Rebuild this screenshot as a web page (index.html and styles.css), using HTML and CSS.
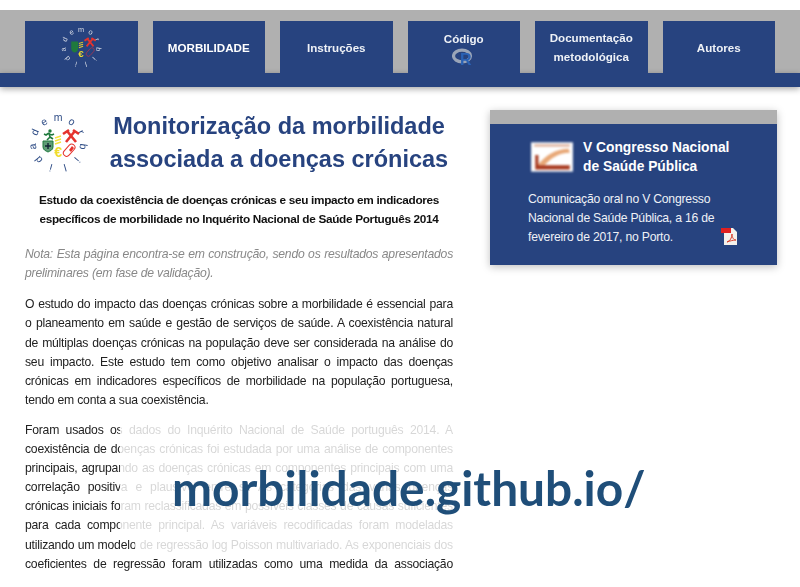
FILE: index.html
```html
<!DOCTYPE html>
<html lang="pt">
<head>
    <meta charset="UTF-8">
    <meta name="viewport" content="width=device-width, initial-scale=1.0">
    <title>Morbilidade</title>
    <link rel="stylesheet" href="styles.css">
</head>
<body>
    <header class="site-header">
        <nav class="tabs">
            <a class="tab">
                <svg class="tab-logo" viewBox="0 0 66 66">
                    <g class="logo-letters" fill="currentColor">
                        <text x="33" y="11" transform="rotate(0 33 33)">m</text>
                        <text x="33" y="11" transform="rotate(33 33 33)">o</text>
                        <text x="33" y="11" transform="rotate(65 33 33)">r</text>
                        <text x="33" y="11" transform="rotate(98 33 33)">b</text>
                        <text x="33" y="11" transform="rotate(131 33 33)">i</text>
                        <text x="33" y="11" transform="rotate(164 33 33)">l</text>
                        <text x="33" y="11" transform="rotate(196 33 33)">i</text>
                        <text x="33" y="11" transform="rotate(229 33 33)">d</text>
                        <text x="33" y="11" transform="rotate(262 33 33)">a</text>
                        <text x="33" y="11" transform="rotate(295 33 33)">d</text>
                        <text x="33" y="11" transform="rotate(327 33 33)">e</text>
                    </g>
                    <path d="M19 25h10v10c0 4-3 5-5 6-2-1-5-2-5-6z" fill="#1f7a3d"/>
                    <path d="M30 28l6-2M30 31l6-2M30 34l6-2" stroke="#e0cd2c" stroke-width="1.5"/>
                    <text class="logo-euro" x="33" y="47">€</text>
                    <path d="M41 32l9-11M51 32l-9-11M38 24l6-4M54 24l-6-4" stroke="#e5322d" stroke-width="2.6" fill="none"/>
                    <rect x="39" y="37" width="14" height="6.5" rx="3.2" transform="rotate(-48 46 40)" fill="none" stroke="#b5334a"/>
                </svg>
            </a>
            <a class="tab tab-active">MORBILIDADE</a>
            <a class="tab">Instruções</a>
            <a class="tab">
                Código
                <svg class="r-icon" viewBox="0 0 24 19">
                    <ellipse cx="10" cy="8" rx="8.5" ry="5.8" fill="none" stroke="#9aa5b8" stroke-width="3.2"/>
                    <text x="8" y="16.5" class="r-letter">R</text>
                </svg>
            </a>
            <a class="tab">Documentação<br>metodológica</a>
            <a class="tab">Autores</a>
        </nav>
        <div class="header-strip"></div>
    </header>

    <main class="page">
        <section class="content">
            <div class="title-row">
                <svg class="title-logo" viewBox="0 0 66 66">
                    <g class="logo-letters" fill="currentColor">
                        <text x="33" y="11" transform="rotate(0 33 33)">m</text>
                        <text x="33" y="11" transform="rotate(33 33 33)">o</text>
                        <text x="33" y="11" transform="rotate(65 33 33)">r</text>
                        <text x="33" y="11" transform="rotate(98 33 33)">b</text>
                        <text x="33" y="11" transform="rotate(131 33 33)">i</text>
                        <text x="33" y="11" transform="rotate(164 33 33)">l</text>
                        <text x="33" y="11" transform="rotate(196 33 33)">i</text>
                        <text x="33" y="11" transform="rotate(229 33 33)">d</text>
                        <text x="33" y="11" transform="rotate(262 33 33)">a</text>
                        <text x="33" y="11" transform="rotate(295 33 33)">d</text>
                        <text x="33" y="11" transform="rotate(327 33 33)">e</text>
                    </g>
                    <circle cx="25" cy="21" r="1.7" fill="#1f7a3d"/>
                    <path d="M24 23l-3 2-2-1M24 23l1 4-3 3M25 27l3 2M24 24l3 1 2-1" fill="none" stroke="#1f7a3d" stroke-width="1.6"/>
                    <path d="M18 31h10v6c0 3-3 4-5 5-2-1-5-2-5-5z" fill="#5f9c76" stroke="#1f7a3d"/>
                    <path d="M23 33v6M20 36h6" stroke="#123" stroke-width="1.4"/>
                    <path d="M30 28l6-2M30 31l6-2M30 34l6-2" stroke="#f4e23c" stroke-width="1.5"/>
                    <text class="logo-euro" x="33" y="47">€</text>
                    <path d="M41 32l9-11M51 32l-9-11M38 24l6-4M54 24l-6-4" stroke="#e5322d" stroke-width="2.6" fill="none"/>
                    <rect x="37" y="37" width="14" height="6.5" rx="3.2" transform="rotate(-48 44 40)" fill="#fff" stroke="#e5322d"/>
                    <path d="M44 40l3-4 2 2-3 4z" fill="#e5322d"/>
                </svg>
                <h1>Monitorização da morbilidade<br>associada a doenças crónicas</h1>
            </div>
            <h2>Estudo da coexistência de doenças crónicas e seu impacto em indicadores<br>específicos de morbilidade no Inquérito Nacional de Saúde Português 2014</h2>
            <p class="note">Nota: Esta página encontra-se em construção, sendo os resultados apresentados preliminares (em fase de validação).</p>
            <p>O estudo do impacto das doenças crónicas sobre a morbilidade é essencial para o planeamento em saúde e gestão de serviços de saúde. A coexistência natural de múltiplas doenças crónicas na população deve ser considerada na análise do seu impacto. Este estudo tem como objetivo analisar o impacto das doenças crónicas em indicadores específicos de morbilidade na população portuguesa, tendo em conta a sua coexistência.</p>
            <p class="cut">Foram usados os dados do Inquérito Nacional de Saúde português 2014. A<br>coexistência de doenças crónicas foi estudada por uma análise de componentes<br>principais, agrupando as doenças crónicas em componentes principais com uma<br>correlação positiva e plausível entre si. As categorias das várias doenças<br>crónicas iniciais foram reclassificadas em possíveis classes de causas suficientes<br>para cada componente principal. As variáveis recodificadas foram modeladas<br>utilizando um modelo de regressão log Poisson multivariado. As exponenciais dos<br>coeficientes de regressão foram utilizadas como uma medida da associação</p>
        </section>

        <aside class="card">
            <div class="card-top"></div>
            <div class="card-body">
                <div class="card-head">
                    <svg class="card-pic" viewBox="0 0 44 32">
                        <rect x="2" y="2" width="40" height="28" fill="#fff"/>
                        <path d="M5 5h34" stroke="#d9a58c" stroke-width="2"/>
                        <path d="M8 24C16 14 26 8 38 8l1 4C28 12 20 18 15 24z" fill="#e8a877"/>
                        <path d="M6 14h3v10h30v4H6z" fill="#a8391e"/>
                    </svg>
                    <h3>V Congresso Nacional<br>de Saúde Pública</h3>
                </div>
                <p>Comunicação oral no V Congresso<br>Nacional de Saúde Pública, a 16 de<br>fevereiro de 2017, no Porto.</p>
                <svg class="pdf-icon" viewBox="0 0 17 19">
                    <path d="M3 1h9l4 4v13H3z" fill="#f4f1ec"/>
                    <rect x="0" y="1" width="10" height="5" fill="#e02020"/>
                    <path d="M6 15c3-1 5-4 5-8 0 4 2 6 4 6-3 0-6 1-9 2z" fill="none" stroke="#d8402c"/>
                </svg>
            </div>
        </aside>
    </main>

    <div class="fade"></div>
    <div class="watermark">morbilidade.github.io/</div>
</body>
</html>
```

FILE: styles.css
```css
html, body {
    margin: 0;
    height: 587px;
    overflow: hidden;
    background: #fff;
}
body {
    font-family: "Liberation Sans", Arial, sans-serif;
    font-size: 12.2px;
    letter-spacing: -0.22px;
    color: #222;
}
.site-header {
    padding-top: 10px;
    height: 85px;
    filter: blur(0.3px);
}
.tabs {
    display: flex;
    gap: 15px;
    height: 52px;
    padding: 11px 0 0 25px;
    background: #b0b0b0;
}
.tab {
    display: flex;
    flex-direction: column;
    align-items: center;
    justify-content: center;
    width: 112.5px;
    height: 52px;
    background: #27437f;
    color: #eef1f6;
    font-size: 11.6px;
    font-weight: bold;
    line-height: 19px;
    letter-spacing: 0;
    text-align: center;
}
.tab-active {
    color: #fff;
}
.tab-logo {
    width: 46px;
    height: 46px;
    color: #d8dce6;
}
.r-icon {
    width: 24px;
    height: 19px;
    margin: 0 0 -1px 1px;
}
.r-letter {
    font: bold 16px "Liberation Sans", sans-serif;
    fill: #2a62b5;
}
.header-strip {
    height: 14px;
    background: #27437f;
    box-shadow: 0 2px 6px rgba(0, 0, 0, 0.35);
}
.page {
    display: flex;
    align-items: flex-start;
    gap: 37px;
    padding: 15px 0 0 25px;
    filter: blur(0.3px);
}
.content {
    width: 428px;
    flex: none;
}
.title-logo {
    width: 66px;
    height: 66px;
    flex: none;
    color: #2f4d86;
}
.logo-letters {
    font: 10.5px "Liberation Sans", sans-serif;
    letter-spacing: 0;
    text-anchor: middle;
}
.logo-euro {
    font: bold 14px "Liberation Sans", sans-serif;
    fill: #f0dc2c;
    text-anchor: middle;
}
.title-row {
    display: flex;
    align-items: flex-start;
}
h1 {
    flex: 1;
    margin: 0;
    padding-left: 14px;
    font-size: 23.5px;
    line-height: 33px;
    font-weight: bold;
    letter-spacing: 0;
    color: #27437f;
    text-align: center;
}
h2 {
    margin: 15px 0 0;
    font-size: 11.8px;
    line-height: 19.1px;
    font-weight: bold;
    letter-spacing: -0.32px;
    color: #111;
    text-align: center;
}
p {
    margin: 12px 0 0;
    line-height: 19.1px;
    text-align: justify;
}
.note {
    margin-top: 16px;
    color: #888;
    font-style: italic;
}
.cut {
    margin-top: 11px;
    text-align-last: justify;
}
.card {
    width: 287px;
    flex: none;
    box-shadow: 0 2px 8px rgba(0, 0, 0, 0.25);
}
.card-top {
    height: 14px;
    background: #b0b0b0;
}
.card-body {
    position: relative;
    height: 141px;
    padding: 14px 20px 0 38px;
    box-sizing: border-box;
    background: #27437f;
    color: #eef1f6;
}
.card-head {
    display: flex;
    align-items: center;
    gap: 8px;
    margin-left: 1px;
}
.card-pic {
    width: 46px;
    height: 34px;
    flex: none;
    filter: blur(0.8px);
}
h3 {
    margin: 0;
    font-size: 13.8px;
    line-height: 19.1px;
    font-weight: bold;
    letter-spacing: 0;
    color: #fff;
}
.card p {
    margin: 14px 0 0;
    text-align: left;
}
.pdf-icon {
    position: absolute;
    left: 231px;
    top: 103px;
    width: 17px;
    height: 19px;
}
.fade {
    position: absolute;
    left: 120px;
    top: 421px;
    width: 350px;
    height: 132px;
    background: rgba(255, 255, 255, 0.82);
    clip-path: polygon(0 0, 100% 0, 100% 100%, 15px 100%, 15px 112px, 0 112px);
}
.watermark {
    position: absolute;
    left: 172px;
    top: 458px;
    font-family: Lato, "Open Sans", sans-serif;
    font-size: 47.8px;
    font-weight: bold;
    line-height: 60px;
    letter-spacing: 0;
    color: #1f4e79;
    white-space: nowrap;
}
```
